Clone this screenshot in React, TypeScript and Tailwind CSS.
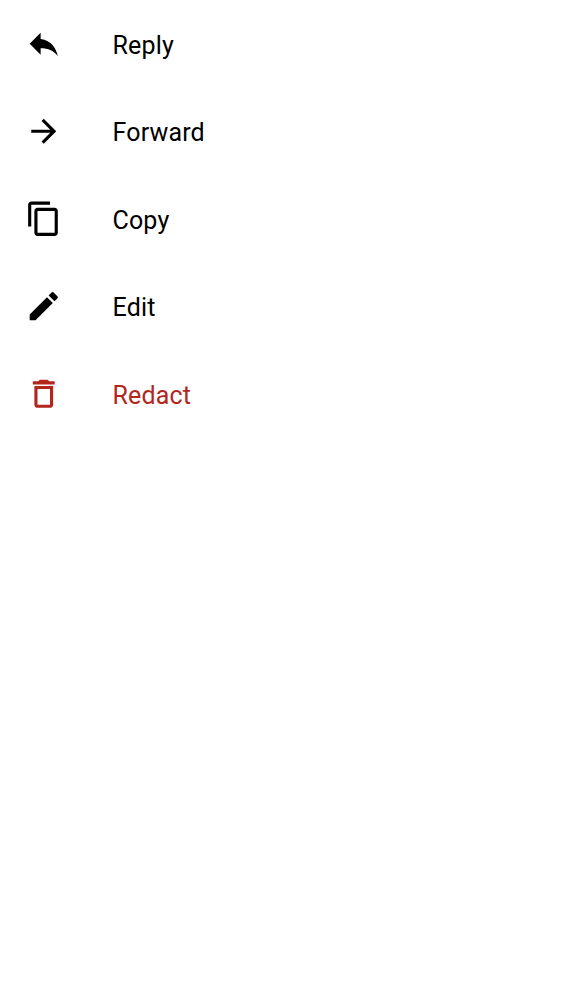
const items = [
  { label: "Reply", path: "M10 9V5l-7 7 7 7v-4.1c5 0 8.5 1.6 11 5.1-1-5-4-10-11-11z" },
  { label: "Forward", viewBox: "0 -0.3 24 24", path: "M12 4l-1.41 1.41L16.17 11H4v2h12.17l-5.58 5.59L12 20l8-8z" },
  { label: "Copy", path: "M16 1H4c-1.1 0-2 .9-2 2v14h2V3h12V1zm3 4H8c-1.1 0-2 .9-2 2v14c0 1.1.9 2 2 2h11c1.1 0 2-.9 2-2V7c0-1.1-.9-2-2-2zm0 16H8V7h11v14z" },
  { label: "Edit", viewBox: "0 -0.3 24 24", path: "M3 17.25V21h3.75L17.81 9.94l-3.75-3.75L3 17.25zM20.71 7.04c.39-.39.39-1.02 0-1.41l-2.34-2.34a.9959.9959 0 0 0-1.41 0l-1.83 1.83 3.75 3.75 1.83-1.83z" },
  { label: "Redact", danger: true, path: "M6 19c0 1.1.9 2 2 2h8c1.1 0 2-.9 2-2V7H6v12zM8 9h8v10H8V9zm7.5-5l-1-1h-5l-1 1H5v2h14V4z" },
];

export default function App() {
  return (
    <main className="h-[1000px] w-full overflow-hidden bg-white font-[Roboto,sans-serif]">
      <ul>
        {items.map(({ label, path, danger, viewBox = "0 0 24 24" }) => (
          <li
            key={label}
            className={`flex items-start gap-[50px] pt-[25px] pl-[25px] odd:h-[87px] even:h-[88px] ${danger ? "text-[#b3261e]" : "text-black"}`}
          >
            <svg viewBox={viewBox} className="size-[37.5px] shrink-0 fill-current" aria-hidden="true">
              <path d={path} />
            </svg>
            <span className="pt-[2px] text-[25px] leading-[37px] tracking-[0.16px]">{label}</span>
          </li>
        ))}
      </ul>
    </main>
  );
}
